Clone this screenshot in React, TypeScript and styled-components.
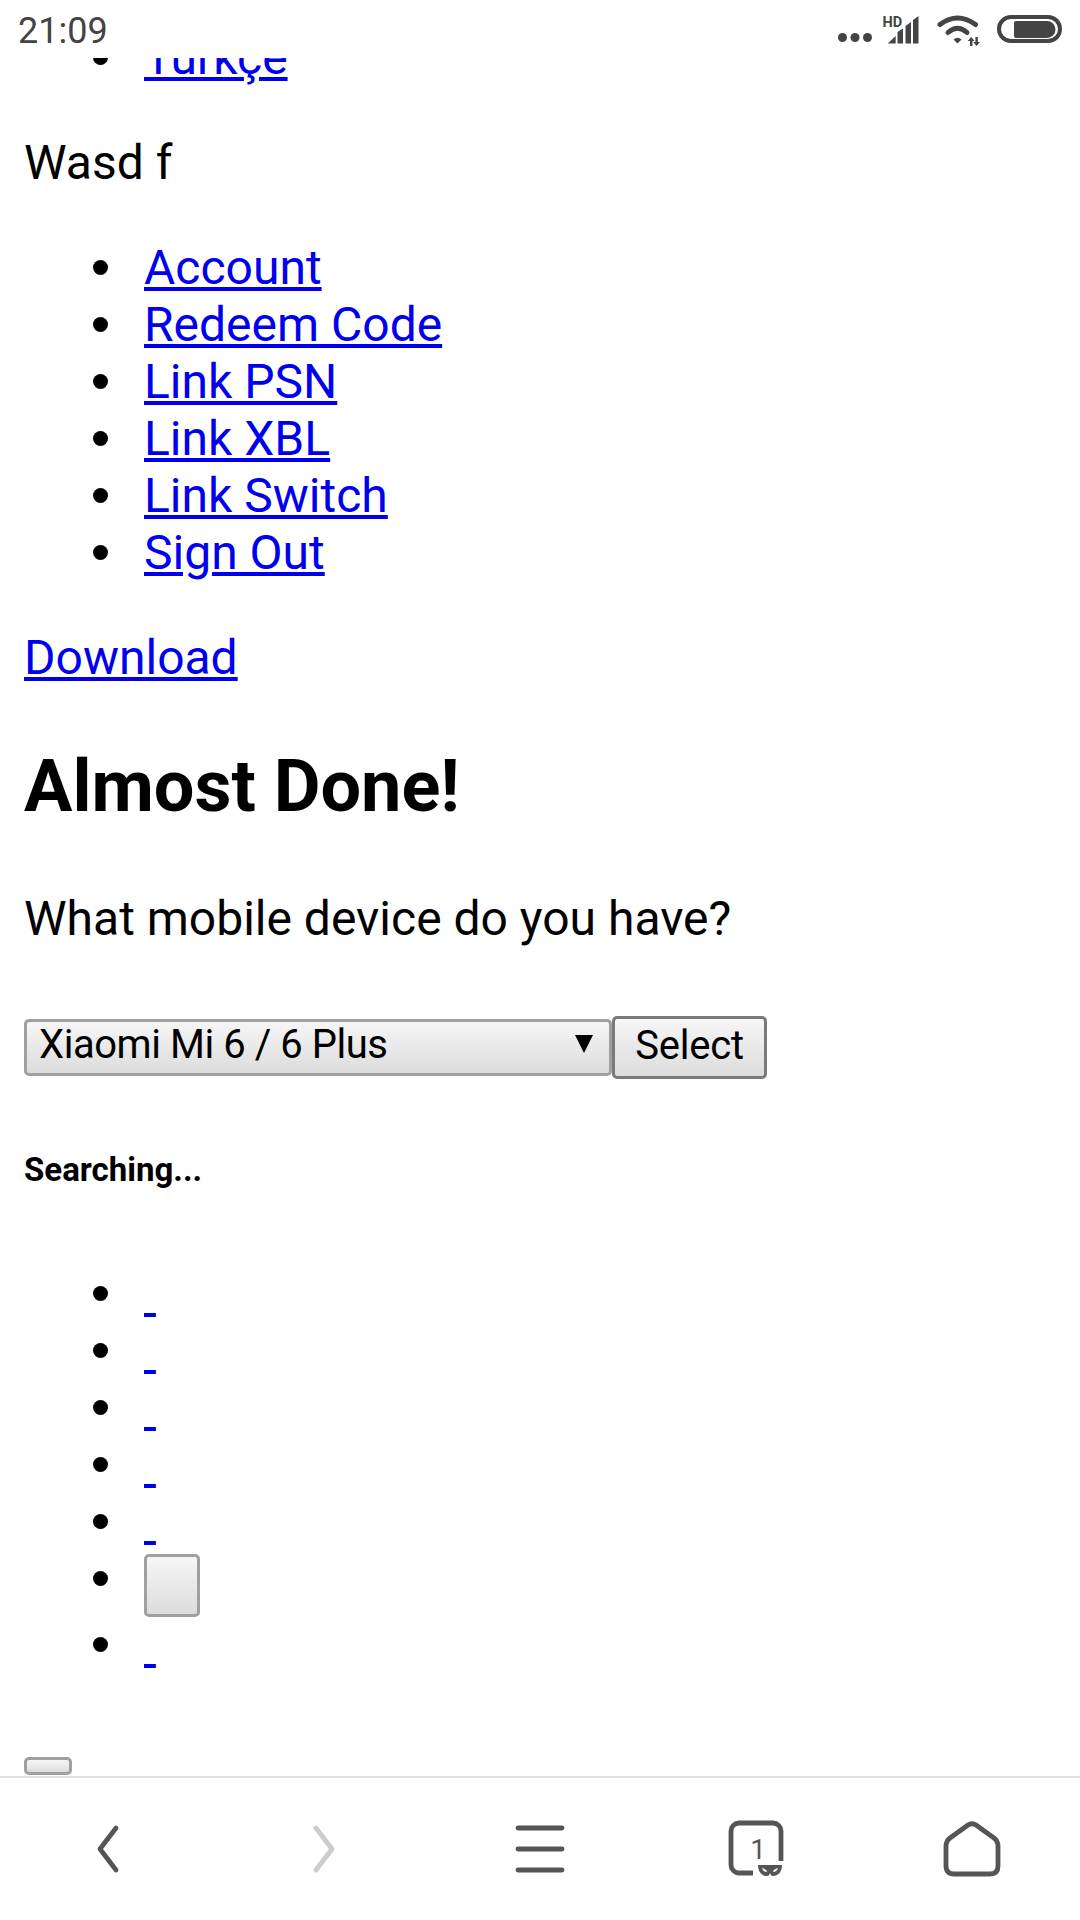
import { createGlobalStyle, styled } from "styled-components"

const GlobalStyle = createGlobalStyle`
    html, body {
        margin: 0;
        padding: 0;
        background: #fff;
    }
`

const Screen = styled.div`
    width: 1080px;
    height: 1920px;
    display: flex;
    flex-direction: column;
    overflow: hidden;
    font-family: Roboto, "Liberation Sans", sans-serif;
    color: #000;
`

const StatusBar = styled.header`
    flex: 0 0 58px;
    display: flex;
    align-items: flex-start;
    padding: 0 16px 0 18px;
    color: #444;
`

const Clock = styled.span`
    font-size: 36px;
    line-height: 54px;
    margin: 4px auto 0 0;
`

const StatusIcon = styled.svg`
    display: block;
    height: 58px;
    fill: #444;
`

const Content = styled.main`
    flex: 1;
    min-height: 0;
    overflow: hidden;
`

const Page = styled.div`
    margin-top: -29px;
    padding: 0 24px;
    font-size: 48px;
    line-height: 57px;
`

const LinkList = styled.ul<{ $first?: boolean }>`
    margin: ${(p) => (p.$first ? "0 0 48px" : "48px 0")};
    padding-left: 120px;
    list-style: none;
`

const Item = styled.li<{ $tall?: boolean }>`
    position: relative;
    height: ${(p) => (p.$tall ? "66px" : "57px")};
    padding-top: ${(p) => (p.$tall ? "4px" : "0")};
    box-sizing: border-box;

    &::before {
        content: "";
        position: absolute;
        left: -51.5px;
        top: 21px;
        width: 15px;
        height: 15px;
        border-radius: 50%;
        background: #000;
    }
`

const TextLink = styled.a`
    color: #0000ee;
    text-decoration: underline;
`

const Paragraph = styled.p`
    margin: 48px 0;
`

const Title = styled.h1`
    margin: 48px 0 0;
    font-size: 72px;
    line-height: 105px;
    font-weight: 700;
`

const Question = styled.p`
    margin: 51px 0 69px;
`

const FormRow = styled.form`
    display: flex;
    align-items: center;
    height: 63px;
`

const SelectBox = styled.div`
    box-sizing: border-box;
    width: 588px;
    height: 57px;
    display: flex;
    align-items: center;
    justify-content: space-between;
    padding: 0 16px 7px 12px;
    border: 3px solid #a0a0a0;
    border-radius: 5px;
    background: linear-gradient(#f6f6f6, #dcdcdc);
    font-size: 40px;
    letter-spacing: -0.45px;
`

const SelectArrow = styled.span`
    width: 18px;
    height: 18px;
    background: #000;
    clip-path: polygon(0 0, 100% 0, 50% 100%);
`

const PushButton = styled.button<{ $width: number; $height: number; $dark?: boolean }>`
    box-sizing: border-box;
    display: block;
    width: ${(p) => p.$width}px;
    height: ${(p) => p.$height}px;
    margin: 0;
    padding: 0 0 4px;
    border: 3px solid ${(p) => (p.$dark ? "#7a7a7a" : "#a0a0a0")};
    border-radius: 5px;
    background: linear-gradient(#f6f6f6, #dcdcdc);
    color: #000;
    font-family: inherit;
    font-size: 40px;
    letter-spacing: -0.2px;
`

const Searching = styled.h6`
    margin: 72px 0 0;
    font-size: 33px;
    line-height: 38px;
    font-weight: 700;
`

const ResultList = styled(LinkList)`
    margin: 76px 0 0;
`

const FooterButton = styled.div`
    margin-top: 84px;
`

const NavBar = styled.nav`
    box-sizing: border-box;
    flex: 0 0 144px;
    display: grid;
    grid-template-columns: repeat(5, 1fr);
    place-items: center;
    border-top: 2px solid #e4e4e4;
    background: #fff;
`

const NavIcon = styled.svg<{ $muted?: boolean }>`
    display: block;
    fill: none;
    stroke: ${(p) => (p.$muted ? "#cccccc" : "#555555")};
    stroke-width: 4.8;
    stroke-linecap: round;
    stroke-linejoin: round;
`

const accountLinks = ["Account", "Redeem Code", "Link PSN", "Link XBL", "Link Switch", "Sign Out"]

function StatusIcons() {
    return (
        <>
            <StatusIcon width="46" viewBox="832 0 46 58">
                <circle cx="842.5" cy="37.5" r="4.5" />
                <circle cx="855" cy="37.5" r="4.5" />
                <circle cx="867.5" cy="37.5" r="4.5" />
            </StatusIcon>
            <StatusIcon width="52" viewBox="878 0 52 58">
                <text x="882.5" y="26.5" fontSize="14.5" fontWeight="700" fontFamily="Roboto, sans-serif">HD</text>
                <path d="M887.7 43.5 L895.7 36 V43.5 Z" />
                <path d="M897.5 32 L903 28.5 V43.5 H897.5 Z" />
                <path d="M905.5 26 L911 22 V43.5 H905.5 Z" />
                <path d="M913 20 L918.5 16 V43.5 H913 Z" />
            </StatusIcon>
            <StatusIcon width="60" viewBox="930 0 60 58">
                <path d="M940 24.5 Q957.5 11.5 975.5 24.5" fill="none" stroke="#444" strokeWidth="5" strokeLinecap="round" />
                <path d="M948 32.5 Q957.5 24 967 32.5" fill="none" stroke="#444" strokeWidth="5" strokeLinecap="round" />
                <path d="M953.5 39.5 Q957.5 36 961.5 39.5 L957.5 43.5 Z" />
                <path d="M971.2 37 L974.6 41 H972.4 V46 H970 V41 H967.8 Z" />
                <path d="M975.4 37 H977.8 V42 H980 L976.6 46 L973.2 42 H975.4 Z" />
            </StatusIcon>
            <StatusIcon width="74" viewBox="990 0 74 58">
                <rect x="999" y="17" width="61" height="24" rx="12" fill="none" stroke="#444" strokeWidth="4" />
                <path d="M1016 21 H1047 a8.5 8.5 0 0 1 0 17 H1016 a2 2 0 0 1 -2 -2 V23 a2 2 0 0 1 2 -2 Z" />
            </StatusIcon>
        </>
    )
}

export default function App() {
    return (
        <Screen>
            <GlobalStyle />
            <StatusBar>
                <Clock>21:09</Clock>
                <StatusIcons />
            </StatusBar>

            <Content>
                <Page>
                    <LinkList $first>
                        <Item><TextLink href="#">Türkçe</TextLink></Item>
                    </LinkList>
                    <Paragraph>Wasd f</Paragraph>
                    <LinkList>
                        {accountLinks.map((label) => (
                            <Item key={label}><TextLink href="#">{label}</TextLink></Item>
                        ))}
                    </LinkList>
                    <Paragraph><TextLink href="#">Download</TextLink></Paragraph>
                    <Title>Almost Done!</Title>
                    <Question>What mobile device do you have?</Question>
                    <FormRow>
                        <SelectBox>
                            Xiaomi Mi 6 / 6 Plus
                            <SelectArrow />
                        </SelectBox>
                        <PushButton type="button" $width={155} $height={63} $dark>Select</PushButton>
                    </FormRow>
                    <Searching>Searching...</Searching>
                    <ResultList>
                        {[0, 1, 2, 3, 4].map((n) => (
                            <Item key={n}><TextLink href="#">&nbsp;</TextLink></Item>
                        ))}
                        <Item $tall><PushButton type="button" $width={56} $height={63} /></Item>
                        <Item><TextLink href="#">&nbsp;</TextLink></Item>
                    </ResultList>
                    <FooterButton><PushButton type="button" $width={48} $height={18} /></FooterButton>
                </Page>
            </Content>

            <NavBar>
                <NavIcon width="24" height="50" viewBox="0 0 24 50">
                    <path d="M20 4 L4 25 L20 46" />
                </NavIcon>
                <NavIcon $muted width="24" height="50" viewBox="0 0 24 50">
                    <path d="M4 4 L20 25 L4 46" />
                </NavIcon>
                <NavIcon width="50" height="48" viewBox="0 0 50 48">
                    <path d="M3 3 H47 M3 24 H47 M3 45 H47" />
                </NavIcon>
                <NavIcon width="56" height="58" viewBox="0 0 56 58">
                    <path d="M53 41 V11 a8 8 0 0 0 -8 -8 H11 a8 8 0 0 0 -8 8 V45 a8 8 0 0 0 8 8 H25" strokeLinecap="butt" />
                    <text x="30" y="39" fontSize="28" textAnchor="middle" fill="#555" stroke="none" fontFamily="Roboto, sans-serif">1</text>
                    <path
                        d="M30 45 H54 C54 52 50 56 45 56 C43 56 42.5 54 42 53 C41.5 54 41 56 39 56 C34 56 30 52 30 45 Z M34 48 C35 51 37 52 39 52 C39 50 37 49 34 48 Z M50 48 C49 51 47 52 45 52 C45 50 47 49 50 48 Z"
                        fill="#555"
                        fillRule="evenodd"
                        stroke="none"
                    />
                </NavIcon>
                <NavIcon width="58" height="58" viewBox="0 0 58 58">
                    <path d="M25 5 Q29 2.5 33 5 L51 18 Q55 21 55 26 V46 Q55 54 47 54 H11 Q3 54 3 46 V26 Q3 21 7 18 Z" />
                </NavIcon>
            </NavBar>
        </Screen>
    )
}
